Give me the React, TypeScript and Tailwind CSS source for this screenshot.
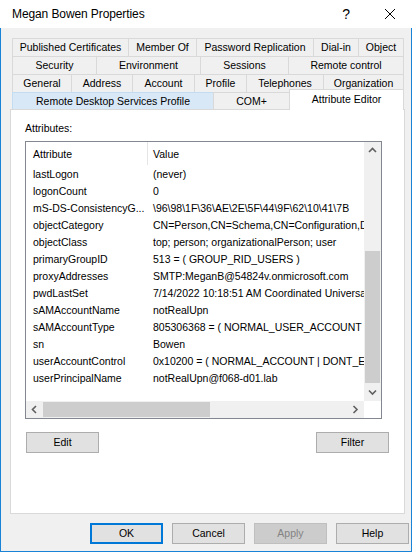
import type { ReactNode } from "react";

type Tab = { label: string; w: string };

const TAB_ROWS: Tab[][] = [
  [
    { label: "Published Certificates", w: "w-[116px]" },
    { label: "Member Of", w: "w-[68px]" },
    { label: "Password Replication", w: "w-[117px]" },
    { label: "Dial-in", w: "w-[45px]" },
    { label: "Object", w: "w-[46px]" },
  ],
  [
    { label: "Security", w: "w-[84px]" },
    { label: "Environment", w: "w-[104px]" },
    { label: "Sessions", w: "w-[88px]" },
    { label: "Remote control", w: "w-[116px]" },
  ],
  [
    { label: "General", w: "w-[59px]" },
    { label: "Address", w: "w-[61px]" },
    { label: "Account", w: "w-[62px]" },
    { label: "Profile", w: "w-[52px]" },
    { label: "Telephones", w: "w-[77px]" },
    { label: "Organization", w: "w-[81px]" },
  ],
];

// values run past the scrollbar and get clipped, same as the real list view
const ATTRIBUTES: [string, string][] = [
  ["lastLogon", "(never)"],
  ["logonCount", "0"],
  ["mS-DS-ConsistencyG...", "\\96\\98\\1F\\36\\AE\\2E\\5F\\44\\9F\\62\\10\\41\\7B"],
  ["objectCategory", "CN=Person,CN=Schema,CN=Configuration,DC=f068"],
  ["objectClass", "top; person; organizationalPerson; user"],
  ["primaryGroupID", "513 = ( GROUP_RID_USERS )"],
  ["proxyAddresses", "SMTP:MeganB@54824v.onmicrosoft.com"],
  ["pwdLastSet", "7/14/2022 10:18:51 AM Coordinated Universal"],
  ["sAMAccountName", "notRealUpn"],
  ["sAMAccountType", "805306368 = ( NORMAL_USER_ACCOUNT )"],
  ["sn", "Bowen"],
  ["userAccountControl", "0x10200 = ( NORMAL_ACCOUNT | DONT_EXPIRE"],
  ["userPrincipalName", "notRealUpn@f068-d01.lab"],
];

function Chevron({ dir }: { dir: "up" | "down" | "left" | "right" }) {
  const d = {
    up: "M1 5 L4.5 1.5 L8 5",
    down: "M1 1.5 L4.5 5 L8 1.5",
    left: "M5 1 L1.5 4.5 L5 8",
    right: "M1.5 1 L5 4.5 L1.5 8",
  }[dir];
  const vertical = dir === "up" || dir === "down";
  return (
    <svg
      width={vertical ? 9 : 7}
      height={vertical ? 7 : 9}
      viewBox={vertical ? "0 0 9 7" : "0 0 7 9"}
      fill="none"
    >
      <path d={d} stroke="#606060" strokeWidth="1.6" />
    </svg>
  );
}

function Button({
  children,
  className = "",
}: {
  children: ReactNode;
  className?: string;
}) {
  return (
    <div
      className={
        "w-[73px] h-[21px] flex items-center justify-center border bg-[#e1e1e1] " +
        (className || "border-[#adadad]")
      }
    >
      {children}
    </div>
  );
}

export default function App() {
  return (
    <div className="w-[417px] h-[556px] bg-white text-[10.5px] text-black font-['Liberation_Sans',Arial,sans-serif] leading-[13px]">
      <div className="w-[412px] h-[552px] flex flex-col">
        {/* title bar */}
        <div className="h-[28px] bg-white flex items-center pl-[12px]">
          <span className="text-[12px] tracking-[-0.1px]">Megan Bowen Properties</span>
          <span className="ml-auto mr-[34px] text-[14px] font-light">?</span>
          <svg width="12" height="12" viewBox="0 0 12 12" className="mr-[16px]">
            <path d="M1 1 L11 11 M11 1 L1 11" stroke="#000" strokeWidth="1" />
          </svg>
        </div>

        {/* dialog body */}
        <div className="flex-1 flex flex-col bg-[#f0f0f0] border-x border-b border-[#1883d7]">
          <div className="ml-[11px] mt-[10px] w-[392px] flex flex-col">
            {TAB_ROWS.map((row, i) => (
              <div key={i} className="flex h-[18px]">
                {row.map((t, j) => (
                  <div
                    key={t.label}
                    className={
                      t.w +
                      " h-full flex items-center justify-center border-t border-l border-[#d9d9d9] whitespace-nowrap" +
                      (j === row.length - 1 ? " border-r" : "")
                    }
                  >
                    {t.label}
                  </div>
                ))}
              </div>
            ))}
            <div className="flex h-[17px] items-end">
              <div className="w-[201px] h-full flex items-center justify-center border-t border-l border-[#c4dcf2] bg-[#d9e8f7] whitespace-nowrap">
                Remote Desktop Services Profile
              </div>
              <div className="w-[76px] h-full flex items-center justify-center border-t border-l border-[#d9d9d9]">
                COM+
              </div>
              <div className="relative z-10 w-[115px] h-[21px] -mb-[1px] shrink-0 flex justify-center pt-[3px] bg-white border-t border-x border-[#d9d9d9]">
                Attribute Editor
              </div>
            </div>
          </div>

          {/* page */}
          <div className="ml-[9px] w-[395px] h-[405px] bg-white border border-[#d9d9d9] flex flex-col px-[14px]">
            <div className="mt-[12px] h-[13px]">Attributes:</div>
            <div className="mt-[6px] w-[357px] h-[278px] border border-[#828790] flex flex-col">
              <div className="flex flex-1 min-h-0">
                <div className="flex-1 min-w-0 overflow-hidden flex flex-col">
                  <div className="h-[24px] flex items-center shrink-0">
                    <div className="w-[121px] pl-[7px]">Attribute</div>
                    <div className="w-px self-stretch mb-[1px] bg-[#e5e5e5]" />
                    <div className="pl-[5px]">Value</div>
                  </div>
                  {ATTRIBUTES.map(([name, value]) => (
                    <div key={name} className="h-[17px] flex items-center shrink-0 whitespace-nowrap">
                      <div className="w-[122px] shrink-0 pl-[7px]">{name}</div>
                      <div className="pl-[5px]">{value}</div>
                    </div>
                  ))}
                </div>
                {/* vertical scrollbar */}
                <div className="w-[17px] shrink-0 bg-[#f0f0f0] flex flex-col">
                  <div className="h-[17px] flex items-center justify-center">
                    <Chevron dir="up" />
                  </div>
                  <div className="h-[92px]" />
                  <div className="h-[132px] mx-[1px] bg-[#cdcdcd]" />
                  <div className="flex-1" />
                  <div className="h-[17px] flex items-center justify-center">
                    <Chevron dir="down" />
                  </div>
                </div>
              </div>
              {/* horizontal scrollbar */}
              <div className="h-[17px] flex shrink-0">
                <div className="flex-1 bg-[#f0f0f0] flex items-stretch">
                  <div className="w-[17px] flex items-center justify-center">
                    <Chevron dir="left" />
                  </div>
                  <div className="w-[167px] my-[1px] bg-[#cdcdcd]" />
                  <div className="flex-1" />
                  <div className="w-[17px] flex items-center justify-center">
                    <Chevron dir="right" />
                  </div>
                </div>
                <div className="w-[17px] bg-white" />
              </div>
            </div>
            <div className="mt-[13px] px-[1px] flex justify-between">
              <Button>Edit</Button>
              <Button>Filter</Button>
            </div>
          </div>

          {/* dialog buttons */}
          <div className="mt-[9px] pl-[89px] flex gap-[9px]">
            <Button className="border-2 border-[#0078d7]">OK</Button>
            <Button>Cancel</Button>
            <div className="w-[73px] h-[21px] flex items-center justify-center border border-[#bfbfbf] bg-[#cccccc] text-[#838383]">
              Apply
            </div>
            <Button>Help</Button>
          </div>
        </div>
      </div>
    </div>
  );
}
